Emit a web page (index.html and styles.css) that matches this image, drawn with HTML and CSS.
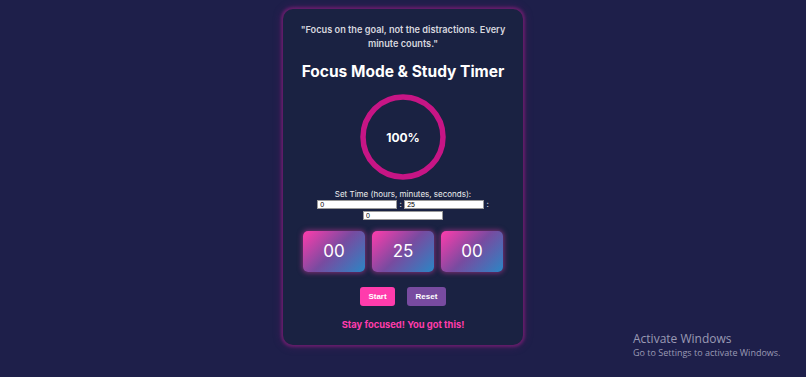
FILE: index.html
```html
<!DOCTYPE html>
<html lang="en">

<head>
    <meta charset="UTF-8">
    <meta name="viewport" content="width=device-width, initial-scale=1.0">
    <title>Focus Mode & Study Timer</title>
    <link rel="stylesheet" href="styles.css">
</head>

<body>

    <div class="container">
        <p class="quote">"Focus on the goal, not the distractions. Every minute counts."</p>
        <h1>Focus Mode &amp; Study Timer</h1>

        <!-- Progress ring -->
        <div class="progress-ring">
            <svg width="88" height="88" viewBox="0 0 88 88">
                <circle cx="44" cy="44" r="40" fill="none" stroke="#c71585" stroke-width="5.5"></circle>
            </svg>
            <span class="percent">100%</span>
        </div>

        <!-- Time inputs -->
        <div class="set-time">
            <label>Set Time (hours, minutes, seconds):</label><br>
            <input type="number" id="hours" value="0"> : <input type="number" id="minutes" value="25"> :
            <input type="number" id="seconds" value="0">
        </div>

        <!-- Countdown boxes -->
        <div class="timer">
            <div class="time-box">00</div>
            <div class="time-box">25</div>
            <div class="time-box">00</div>
        </div>

        <div class="controls">
            <button class="btn start">Start</button>
            <button class="btn reset">Reset</button>
        </div>

        <p class="motivation">Stay focused! You got this!</p>
    </div>

    <div class="watermark">
        <div class="wm-title">Activate Windows</div>
        <div class="wm-sub">Go to Settings to activate Windows.</div>
    </div>

</body>

</html>
```

FILE: styles.css
```css
/* Reset */
* {
    margin: 0;
    padding: 0;
    box-sizing: border-box;
}

body {
    background: #1e1f4a;
    font-family: 'Inter', 'Open Sans', sans-serif;
    color: #fff;
    height: 100vh;
    overflow: hidden;
    display: flex;
    justify-content: center;
    align-items: flex-start;
    padding-top: 9px;
}

.container {
    width: 240px;
    height: 336px;
    background: #1a2242;
    border-radius: 10px;
    padding: 14px 14px 0;
    text-align: center;
    box-shadow: 0 0 3px 2px rgba(150, 30, 130, 0.55), 0 0 8px 2px rgba(120, 30, 120, 0.3);
}

.quote {
    font-size: 9.2px;
    font-weight: 600;
    line-height: 14px;
    color: #d6d6de;
}

h1 {
    font-size: 15.5px;
    font-weight: 700;
    margin-top: 10px;
    line-height: 22px;
    white-space: nowrap;
}

/* Progress ring */
.progress-ring {
    position: relative;
    width: 88px;
    height: 88px;
    margin: 10px auto 0;
}

.progress-ring svg {
    display: block;
}

.percent {
    position: absolute;
    inset: 0;
    display: flex;
    align-items: center;
    justify-content: center;
    font-size: 12px;
    font-weight: 700;
}

/* Inputs */
.set-time {
    margin-top: 8px;
    font-size: 8px;
    line-height: 10px;
    color: #eee;
}

.set-time input {
    width: 80px;
    height: 9px;
    font-size: 7px;
    border: 1px solid #999;
    padding: 0 2px;
    font-family: 'Liberation Sans', sans-serif;
    vertical-align: middle;
    -moz-appearance: textfield;
}

.set-time input::-webkit-inner-spin-button,
.set-time input::-webkit-outer-spin-button {
    -webkit-appearance: none;
    margin: 0;
}

/* Countdown */
.timer {
    display: flex;
    justify-content: center;
    gap: 7px;
    margin-top: 11px;
}

.time-box {
    width: 62px;
    height: 41px;
    border-radius: 5px;
    background: linear-gradient(135deg, #ff3cac, #784ba0, #2b86c5);
    box-shadow: 0 0 5px 1px rgba(230, 60, 170, 0.5);
    display: flex;
    align-items: center;
    justify-content: center;
    font-size: 17px;
    font-weight: 400;
}

/* Buttons */
.controls {
    display: flex;
    justify-content: center;
    gap: 12px;
    margin-top: 15px;
}

.btn {
    height: 19px;
    border: none;
    border-radius: 3px;
    color: #fff;
    font-family: 'Liberation Sans', sans-serif;
    font-weight: 700;
    font-size: 8px;
    cursor: pointer;
}

.start {
    width: 35px;
    background: #ff3cac;
}

.reset {
    width: 39px;
    background: #784ba0;
}

.motivation {
    margin-top: 13px;
    font-size: 9.4px;
    font-weight: 700;
    color: #ff3cac;
}

/* Windows watermark overlay */
.watermark {
    position: absolute;
    left: 633px;
    top: 331px;
    font-family: 'Open Sans', 'Noto Sans', sans-serif;
    color: #9a9ab4;
}

.wm-title {
    font-size: 12px;
    line-height: 16px;
}

.wm-sub {
    font-size: 9px;
    line-height: 12px;
}
```
